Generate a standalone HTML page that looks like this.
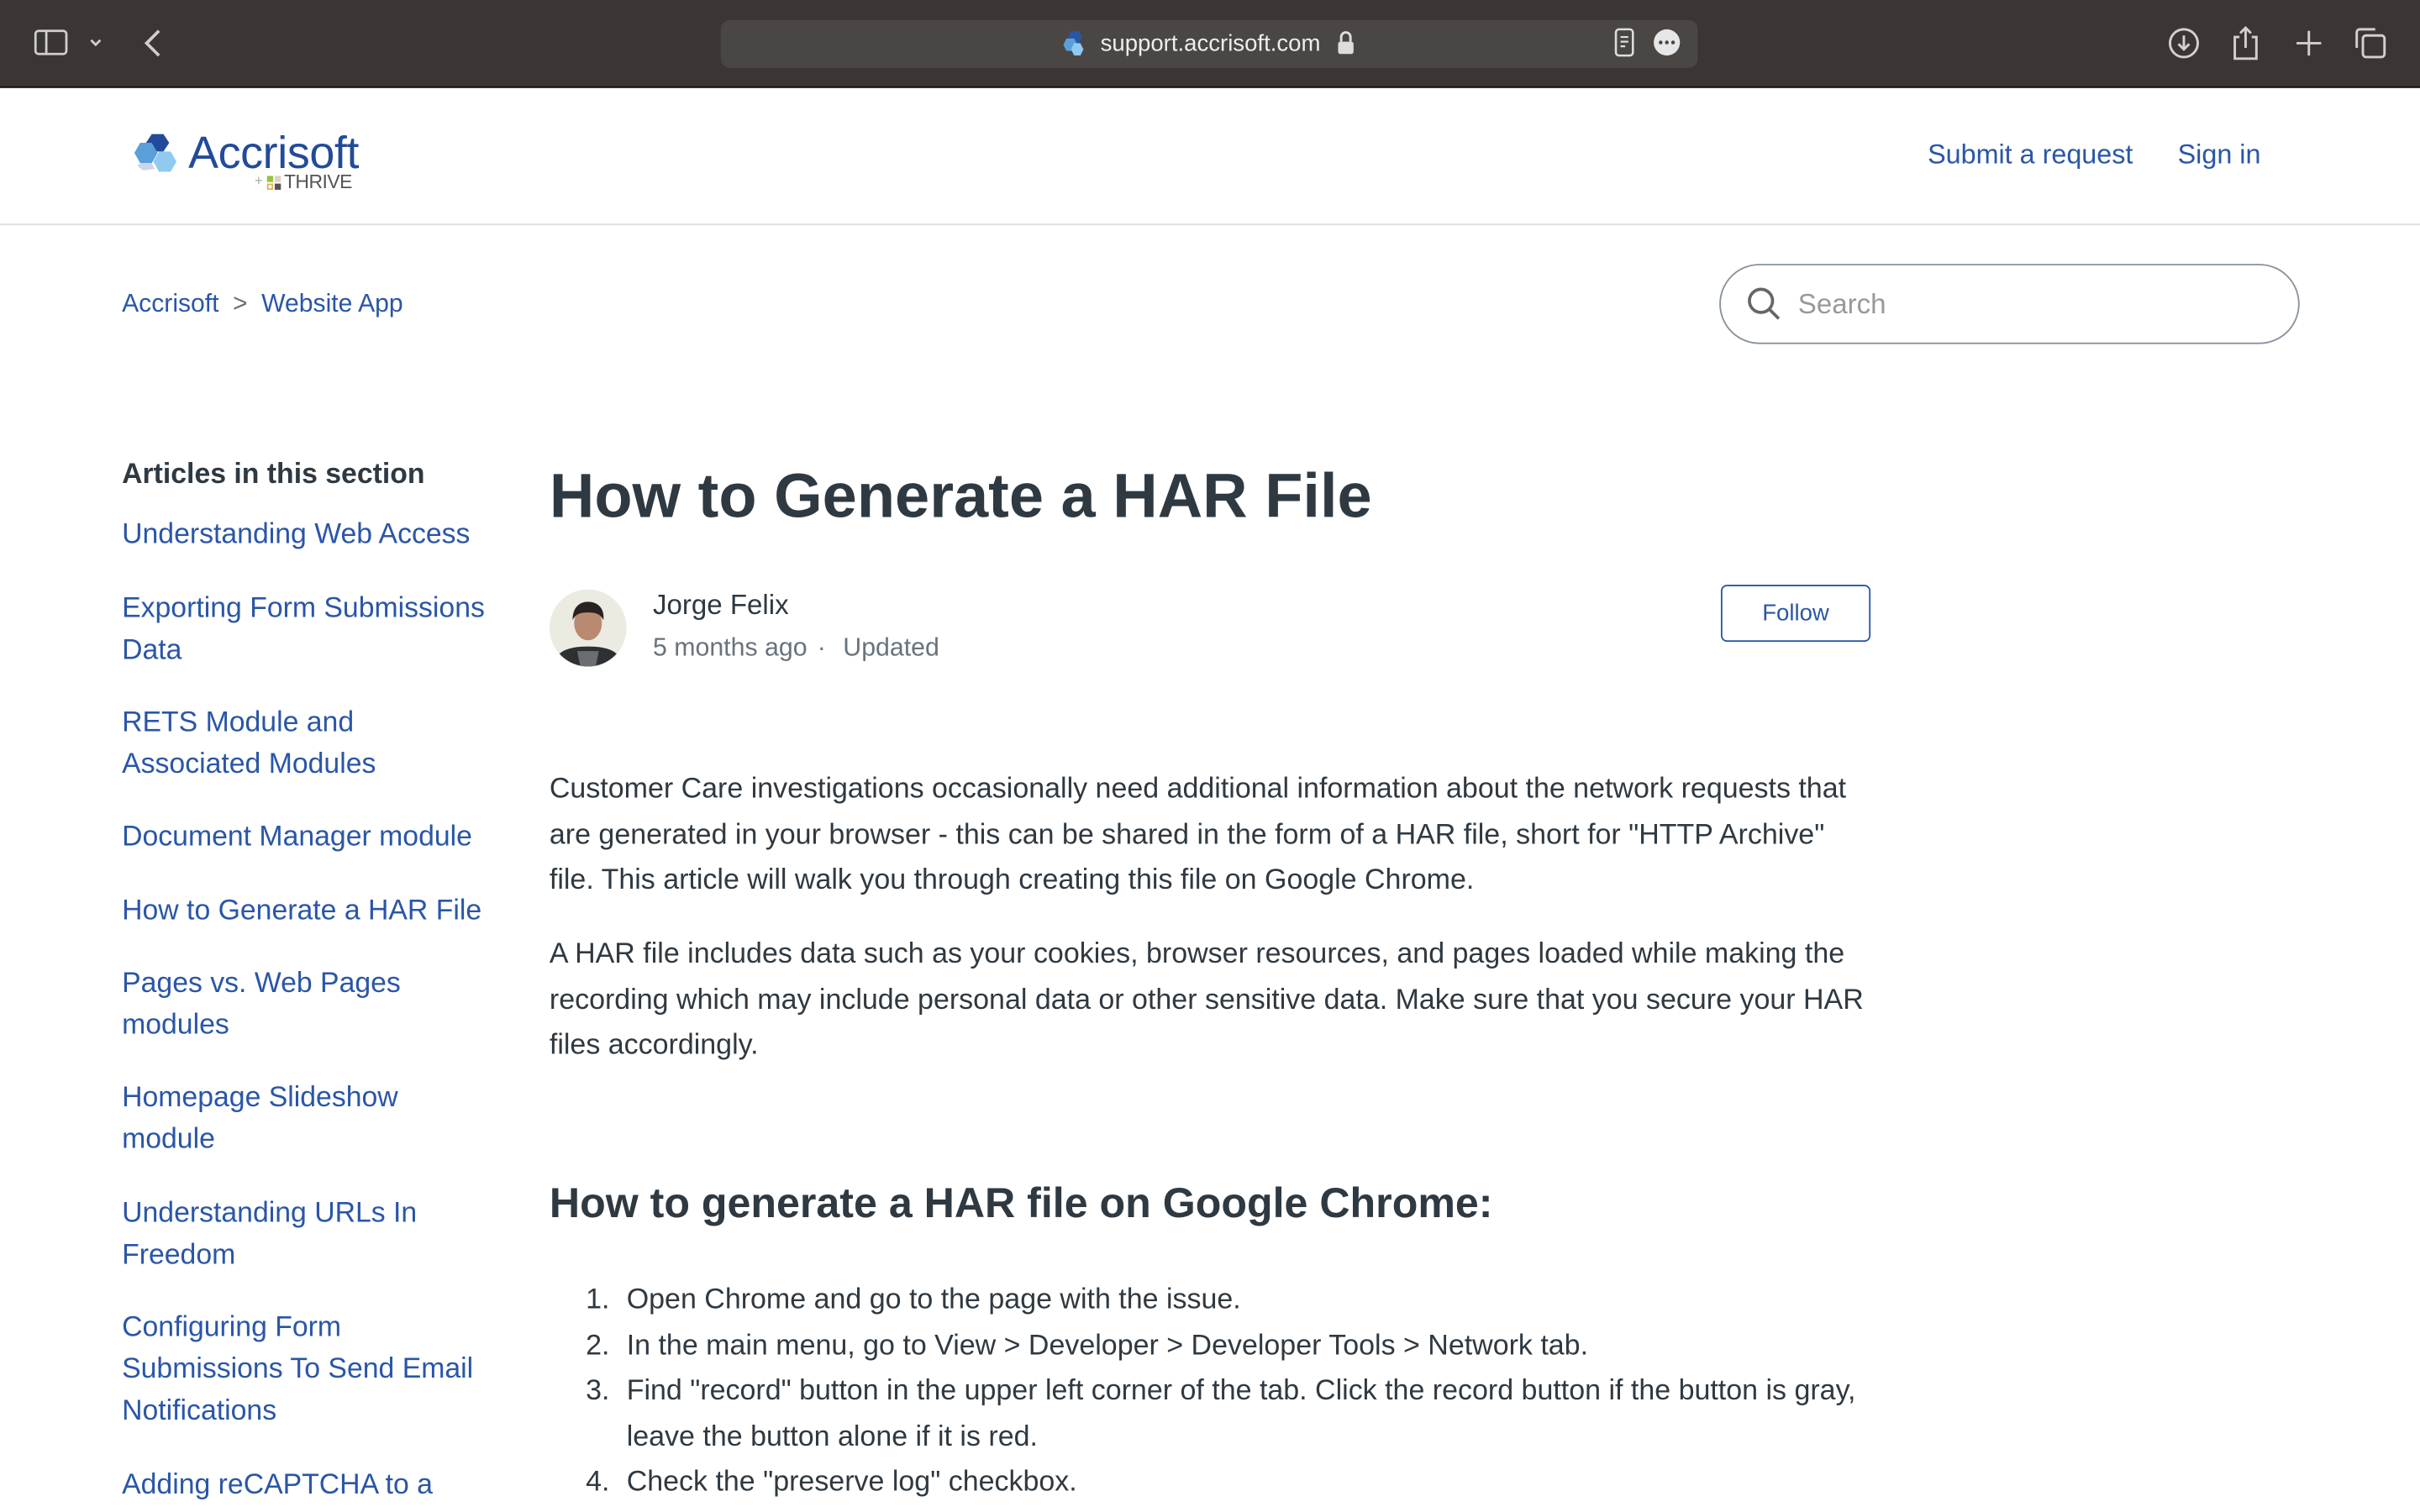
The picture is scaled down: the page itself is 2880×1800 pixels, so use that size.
<!DOCTYPE html>
<html><head><meta charset="utf-8"><style>
*{margin:0;padding:0;box-sizing:border-box}
html,body{width:2880px;height:1800px;overflow:hidden;background:#fff}
#w{position:absolute;left:0;top:0;width:1568px;height:980px;transform:scale(1.836735);transform-origin:0 0;font-family:"Liberation Sans",Arial,sans-serif;color:#2f3941}
.a{position:absolute;white-space:nowrap}
.lk{color:#2a56a8}
#bar{position:absolute;left:0;top:0;width:1568px;height:57px;background:#3b3634;border-bottom:1px solid #111}
#url{position:absolute;left:467px;top:13px;width:633px;height:31px;background:#4a4644;border-radius:6px}
.side div{position:absolute;left:79px;font-size:18.4px;line-height:27px;color:#2a56a8}
.p{position:absolute;left:356px;font-size:18.5px;line-height:29.5px;color:#2f3941;width:850px}
.li{position:absolute;left:356px;font-size:18.5px;line-height:29.5px}
.li span{display:inline-block;width:50px;text-align:right;padding-right:11px;vertical-align:top}
</style></head><body><div id="w">
<div id="bar">
<svg class="a" style="left:22px;top:18px" width="60" height="20" viewBox="0 0 60 20" fill="none" stroke="#cfcfcf" stroke-width="1.5"><rect x="1" y="2" width="20" height="15" rx="2"/><line x1="8" y1="2" x2="8" y2="17"/><path d="M37 8l3 3 3-3"/></svg>
<svg class="a" style="left:92px;top:18px" width="14" height="20" viewBox="0 0 14 20" fill="none" stroke="#cfcfcf" stroke-width="2"><path d="M11 2L3 10l8 8"/></svg>
<div id="url"></div>
<svg class="a" style="left:689px;top:20px" width="14" height="16" viewBox="0 0 14 16"><polygon points="5,0 10,0 12,4 10,8 5,8 3,4" fill="#2a56a8"/><polygon points="2,5 7,5 9,9 7,13 2,13 0,9" fill="#5aa0d8"/><polygon points="7,8 11,8 13,12 11,16 7,16 5,12" fill="#90caf0"/></svg>
<div class="a" style="left:713px;top:20px;font-size:15px;color:#eee">support.accrisoft.com</div>
<svg class="a" style="left:866px;top:19px" width="12" height="17" viewBox="0 0 12 17"><path d="M3 8V5a3 3 0 016 0v3" fill="none" stroke="#ddd" stroke-width="1.6"/><rect x="1" y="8" width="10" height="8" rx="1.5" fill="#ddd"/></svg>
<svg class="a" style="left:1045px;top:18px" width="48" height="20" viewBox="0 0 48 20"><rect x="2" y="1" width="11" height="17" rx="2" fill="none" stroke="#ddd" stroke-width="1.4"/><path d="M5 6h5M5 9h5M5 12h3" stroke="#ddd" stroke-width="1.2"/><circle cx="35" cy="9.5" r="8.5" fill="#e6e6e6"/><circle cx="31" cy="9.5" r="1.2" fill="#444"/><circle cx="35" cy="9.5" r="1.2" fill="#444"/><circle cx="39" cy="9.5" r="1.2" fill="#444"/></svg>
<svg class="a" style="left:1403px;top:15px" width="150" height="26" viewBox="0 0 150 26" fill="none" stroke="#d0d0d0" stroke-width="1.6"><circle cx="12" cy="13" r="9"/><path d="M12 8v9M8.5 13.5l3.5 3.5 3.5-3.5"/><path d="M48 9h-3v14h14V9h-3M52 3v13M48.5 6.5L52 3l3.5 3.5"/><path d="M93 5v16M85 13h16"/><rect x="128" y="8" width="14" height="14" rx="2"/><path d="M124 16V6a2 2 0 012-2h10"/></svg>
</div>

<svg class="a" style="left:87px;top:85px" width="34" height="32" viewBox="0 0 36 34"><polygon points="12,2 20,2 24,8 20,14 12,14 8,8" fill="#234a9a"/><polygon points="4,8 12,8 16,15 12,22 4,22 0,15" fill="#5a9fd8"/><polygon points="17,14 25,14 29,21 25,28 17,28 13,21" fill="#90caf0"/><polygon points="4,22 12,22 14,26 6,27 2,24" fill="#ccd6e6"/></svg>
<div class="a" style="left:122px;top:83px;font-size:29.3px;color:#234a9a;letter-spacing:-0.2px">Accrisoft</div>
<div class="a" style="left:173px;top:114px;width:4px;height:4px;background:#9bc23c"></div>
<div class="a" style="left:178px;top:114px;width:4px;height:4px;background:#ddd5c0"></div>
<div class="a" style="left:173px;top:119px;width:4px;height:4px;border:1px solid #e8b050"></div>
<div class="a" style="left:178px;top:119px;width:4px;height:4px;background:#555"></div>
<div class="a" style="left:165px;top:112px;font-size:9px;color:#aaa">+</div>
<div class="a" style="left:184px;top:111px;font-size:12.5px;color:#555;letter-spacing:-0.3px">THRIVE</div>
<div class="a lk" style="left:1249px;top:90px;font-size:17.6px">Submit a request</div>
<div class="a lk" style="left:1411px;top:90px;font-size:17.6px">Sign in</div>
<div class="a" style="left:0;top:145px;width:1568px;height:1px;background:#ddd"></div>

<div class="a" style="left:79px;top:188px;font-size:16.4px"><span class="lk">Accrisoft</span><span style="color:#68737d;padding:0 9px">&gt;</span><span class="lk">Website App</span></div>
<div class="a" style="left:1114px;top:171px;width:376px;height:52px;border:1px solid #87929d;border-radius:26px"></div>
<svg class="a" style="left:1131px;top:185px" width="24" height="24" viewBox="0 0 24 24" fill="none" stroke="#666" stroke-width="2"><circle cx="10" cy="10" r="7.5"/><path d="M15.5 15.5l6 6"/></svg>
<div class="a" style="left:1165px;top:187px;font-size:18px;color:#999">Search</div>

<div class="a" style="left:79px;top:296px;font-size:18.4px;font-weight:bold;color:#2f3941">Articles in this section</div>
<div class="side">
<div style="top:332px">Understanding Web Access</div>
<div style="top:380px">Exporting Form Submissions<br>Data</div>
<div style="top:454px">RETS Module and<br>Associated Modules</div>
<div style="top:528px">Document Manager module</div>
<div style="top:576px">How to Generate a HAR File</div>
<div style="top:623px">Pages vs. Web Pages<br>modules</div>
<div style="top:697px">Homepage Slideshow<br>module</div>
<div style="top:772px">Understanding URLs In<br>Freedom</div>
<div style="top:846px">Configuring Form<br>Submissions To Send Email<br>Notifications</div>
<div style="top:948px">Adding reCAPTCHA to a</div>
</div>

<div class="a" style="left:356px;top:299px;font-size:40.3px;font-weight:bold;color:#2f3941">How to Generate a HAR File</div>
<svg class="a" style="left:356px;top:382px" width="50" height="50" viewBox="0 0 50 50"><defs><clipPath id="c"><circle cx="25" cy="25" r="25"/></clipPath></defs><g clip-path="url(#c)"><rect width="50" height="50" fill="#ecebe2"/><path d="M2 50c2-10 10-13 23-13s21 3 23 13z" fill="#2f3032"/><path d="M18 40h14l-2 10h-10z" fill="#6a6d72"/><ellipse cx="25" cy="22" rx="9" ry="11" fill="#b98a70"/><path d="M15 20c0-9 5-12 10-12s11 3 10 12c-2-4-5-5-10-5s-8 1-10 5z" fill="#2a2220"/></g></svg>
<div class="a" style="left:423px;top:382px;font-size:18px;color:#2f3941">Jorge Felix</div>
<div class="a" style="left:423px;top:411px;font-size:16.5px;color:#68737d">5 months ago <span style="padding:0 2px">·</span>&nbsp; Updated</div>
<div class="a" style="left:1115px;top:379px;width:97px;height:37px;border:1px solid #2a56a8;border-radius:4px;color:#2a56a8;font-size:15px;text-align:center;line-height:35px">Follow</div>

<div class="p" style="top:496px">Customer Care investigations occasionally need additional information about the network requests that are generated in your browser - this can be shared in the form of a HAR file, short for "HTTP Archive" file. This article will walk you through creating this file on Google Chrome.</div>
<div class="p" style="top:603px;width:862px">A HAR file includes data such as your cookies, browser resources, and pages loaded while making the recording which may include personal data or other sensitive data. Make sure that you secure your HAR files accordingly.</div>
<div class="a" style="left:356px;top:764px;font-size:27.3px;font-weight:bold;color:#2f3941">How to generate a HAR file on Google Chrome:</div>
<div class="li" style="top:827px"><span>1.</span>Open Chrome and go to the page with the issue.</div>
<div class="li" style="top:857px"><span>2.</span>In the main menu, go to View &gt; Developer &gt; Developer Tools &gt; Network tab.</div>
<div class="li" style="top:886px"><span>3.</span>Find "record" button in the upper left corner of the tab. Click the record button if the button is gray,<br><span></span>leave the button alone if it is red.</div>
<div class="li" style="top:945px"><span>4.</span>Check the "preserve log" checkbox.</div>
</div></body></html>
